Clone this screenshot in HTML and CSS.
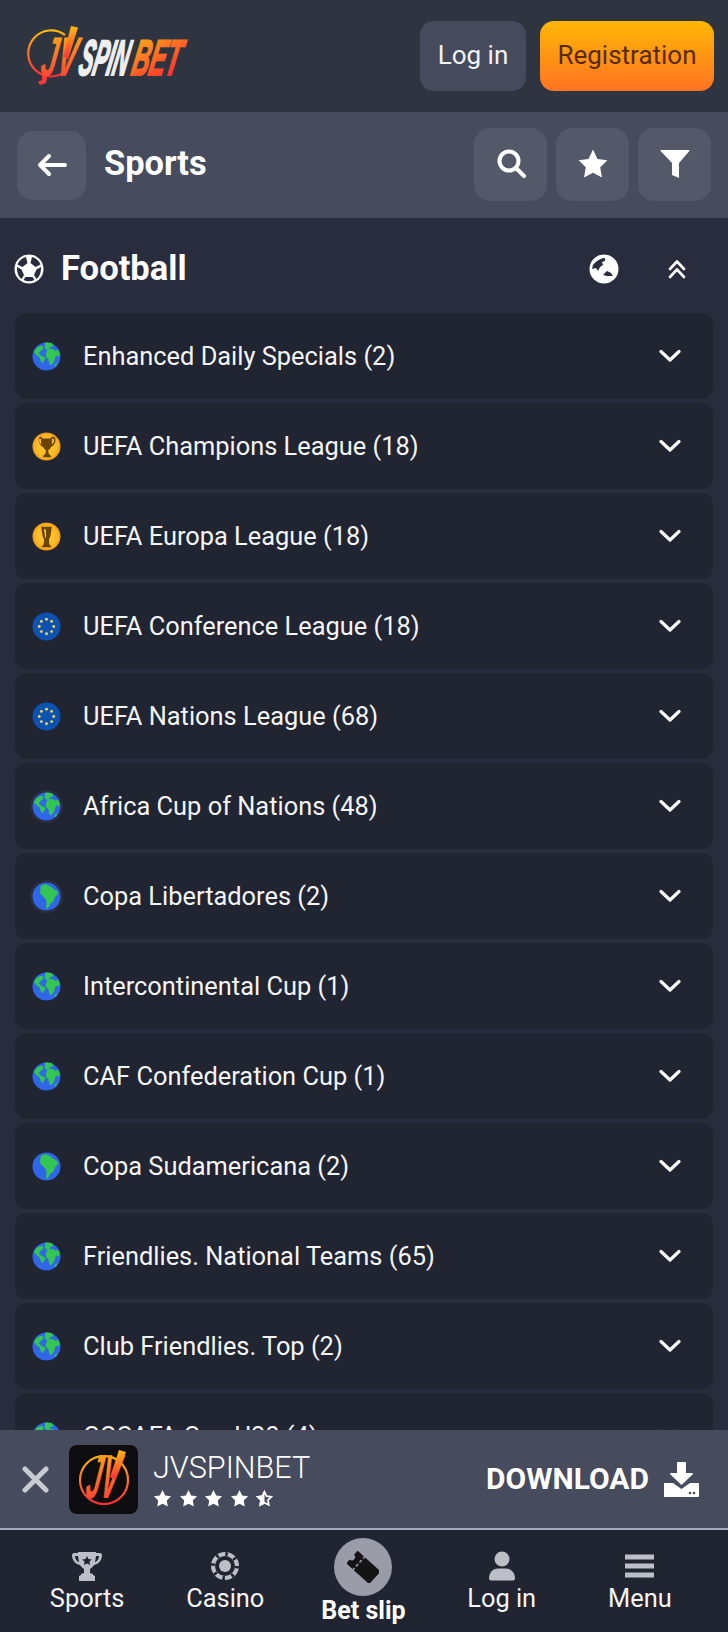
FILE: index.html
```html
<!DOCTYPE html>
<html lang="en">
<head>
    <meta charset="UTF-8">
    <title>JVSPINBET Sports</title>
    <link rel="stylesheet" href="styles.css">
</head>
<body>

<svg class="defs" width="0" height="0">
    <defs>
        <linearGradient id="logoOrange" x1="0" y1="0" x2="0" y2="1">
            <stop offset="0" stop-color="#ffb90f"/>
            <stop offset="1" stop-color="#ff2d3a"/>
        </linearGradient>
        <linearGradient id="logoBet" x1="0" y1="0" x2="0.6" y2="1">
            <stop offset="0" stop-color="#ffb91a"/>
            <stop offset="1" stop-color="#ff2b2b"/>
        </linearGradient>
        <radialGradient id="gold" cx="0.5" cy="0.5" r="0.5">
            <stop offset="0" stop-color="#ffd23a"/>
            <stop offset="0.8" stop-color="#fdb522"/>
            <stop offset="1" stop-color="#e8981a"/>
        </radialGradient>
        <symbol id="globeAtl" viewBox="0 0 30 30">
            <circle cx="15" cy="15" r="14.5" fill="#2f66ea"/>
            <path fill="#33c653" d="M13 1c3-.8 6-.5 8 .3l1 3-3 1-1 2.5-3 .2-2-2 .5-3zM16 8l5-1 3 2 3-1 2 5-2 2-2-1-1 2-1 4-3 4-2-1-1-5-2-2-1-3 1-3zM2 10l3-4 4-2 3 1-1 3-2 1-2 3 4 3 3 1-1 3-2 3-2-2-1-4-3-2-2-2zM24 23l2-1-1 3-2 1z"/>
        </symbol>
        <symbol id="globeSa" viewBox="0 0 30 30">
            <circle cx="15" cy="15" r="14.5" fill="#2f66ea"/>
            <path fill="#33c653" d="M9 4l5-2 4 2 4 3 5 3-.5 3-3 3-1 4-3 2-2 3-2 3-1-1 .5-5-.5-4-3-3-3-3 0-3z"/>
        </symbol>
        <symbol id="globeWhite" viewBox="0 0 30 30">
            <circle cx="15" cy="15" r="14.5" fill="#fff"/>
            <path fill="#282c3d" d="M16 4C12 4 7 7 4 11l-1 4 4-1 2 3 2-4 3-2-1-3 3-1zM14 21l4-4 4 2 2 3-6 0z"/>
        </symbol>
        <symbol id="euro" viewBox="0 0 30 30">
            <circle cx="15" cy="15" r="14.5" fill="#0b52b3"/>
            <g fill="#ecd455">
                <circle cx="15" cy="7.5" r="1.5"/>
                <circle cx="20.3" cy="9.7" r="1.5"/>
                <circle cx="22.5" cy="15" r="1.5"/>
                <circle cx="20.3" cy="20.3" r="1.5"/>
                <circle cx="15" cy="22.5" r="1.5"/>
                <circle cx="9.7" cy="20.3" r="1.5"/>
                <circle cx="7.5" cy="15" r="1.5"/>
                <circle cx="9.7" cy="9.7" r="1.5"/>
            </g>
        </symbol>
        <symbol id="cupCl" viewBox="0 0 30 30">
            <circle cx="15" cy="15" r="14.5" fill="url(#gold)"/>
            <path fill="#6b4400" transform="translate(-2.25 -2.5) scale(1.15)" d="M9 6.5c1.500 0 2 .5 2.500 1.500h7c.5-1 1-1.500 2.500-1.500 2 0 2.500 2.500 1.800 5-.6 2-2 3.500-3.800 4.500-.8 1.500-1.500 2.200-2.500 2.800l.5 3 2 2v1h-7v-1l2-2 .5-3c-1-.6-1.700-1.300-2.500-2.800-1.800-1-3.200-2.500-3.800-4.500-.7-2.500-.2-5 1.800-5zm0 1.500c-.9 0-1 1.700-.5 3.200.3 1 1 1.800 1.700 2.400L10 9c0-.5-.4-1-1-1zm12 0c-.6 0-1 .5-1 1l-.2 4.600c.7-.6 1.400-1.400 1.700-2.400.5-1.500.4-3.200-.5-3.200z"/>
        </symbol>
        <symbol id="cupEl" viewBox="0 0 30 30">
            <circle cx="15" cy="15" r="14.5" fill="url(#gold)"/>
            <path fill="#6b4400" d="M9.500 5h11l-1.500 10-1.500 3 .4 5 2.100 2.500v.5h-10v-.5l2.100-2.500.4-5-1.500-3z"/>
            <path fill="#ffd23a" d="M12.500 7.500h1.800l.3 8.500-1 0z"/>
        </symbol>
        <symbol id="chevron" viewBox="0 0 22 14">
            <path fill="none" stroke="#fff" stroke-width="3.2" stroke-linecap="round" stroke-linejoin="round" d="M2 2.500l9 8.500 9-8.500"/>
        </symbol>
        <symbol id="star" viewBox="0 0 20 20">
            <path fill="#fff" d="M10 1l2.800 5.800 6.200.9-4.500 4.400 1.100 6.300L10 15.400l-5.600 3 1.100-6.300L1 7.700l6.200-.9z"/>
        </symbol>
    </defs>
</svg>

<div class="page">
    <header class="top">
        <svg class="logo" viewBox="0 0 160 62" role="img" aria-label="JVSPINBET">
            <path d="M37 10A23 23 0 1 0 38 46" fill="none" stroke="url(#logoOrange)" stroke-width="2.2"/>
            <text class="logo-jv" transform="translate(11 51) skewX(-10) scale(.51 1)" fill="url(#logoOrange)">JV</text>
            <path d="M43 1l7 1.500-10 32-5-3z" fill="url(#logoOrange)"/>
            <path d="M14 50l5 2-1 6-6 2-2-3 4-2z" fill="#ff3a38"/>
            <text class="logo-word" transform="translate(49 50) skewX(-12) scale(.42 1)" fill="#efefef" stroke="#efefef">SPIN</text>
            <text class="logo-word" transform="translate(102 50) skewX(-12) scale(.48 1)" fill="url(#logoBet)" stroke="url(#logoBet)">BET</text>
        </svg>
        <div class="top-btns">
            <a class="btn btn-login" href="#">Log in</a>
            <a class="btn btn-reg" href="#">Registration</a>
        </div>
    </header>

    <div class="subbar">
        <a class="square back" href="#">
            <svg width="32" height="24" viewBox="0 0 32 24"><path fill="none" stroke="#fff" stroke-width="4" stroke-linecap="round" stroke-linejoin="round" d="M29 12H4M13 3l-9 9 9 9"/></svg>
        </a>
        <h1 class="subbar-title">Sports</h1>
        <div class="subbar-tools">
            <a class="square" href="#">
                <svg width="30" height="32" viewBox="0 0 30 32"><circle cx="13" cy="13" r="9.500" fill="none" stroke="#fff" stroke-width="4"/><path stroke="#fff" stroke-width="4" stroke-linecap="round" d="M20 20l8 8"/></svg>
            </a>
            <a class="square" href="#">
                <svg width="32" height="32" viewBox="0 0 20 20"><use href="#star"/></svg>
            </a>
            <a class="square" href="#">
                <svg width="30" height="32" viewBox="0 0 30 30"><path fill="#fff" d="M1 1h28c.5 0 .7.5.4 1L19 14v15l-7-3V14L.6 2C.3 1.500.5 1 1 1z"/></svg>
            </a>
        </div>
    </div>

    <main class="content">
        <div class="sport-head">
            <svg class="ball" width="30" height="30" viewBox="0 0 30 30">
                <circle cx="15" cy="15" r="14.5" fill="#fff"/>
                <path fill="#282c3d" d="M12 3l1.500 6-5 4-5-2.500C5 6.500 8 4 12 3zM18 3l-1.500 6 5 4 5-2.500C25 6.500 22 4 18 3zM3 13l4.500 2.500L10 21l-2.500 4C4.500 23 2.800 18 3 13zM27 13l-4.500 2.500L20 21l2.500 4c3-2 4.700-7 4.500-12zM11.500 23h7l2 3c-3.500 1.800-7.500 1.800-11 0z"/>
            </svg>
            <h2 class="sport-title">Football</h2>
            <svg class="sport-globe" width="30" height="30"><use href="#globeWhite"/></svg>
            <svg class="sport-collapse" width="18" height="20" viewBox="0 0 18 20">
                <path fill="none" stroke="#fff" stroke-width="2.6" stroke-linecap="round" stroke-linejoin="round" d="M2 10l7-7.500L16 10M2 18l7-7.500 7 7.500"/>
            </svg>
        </div>

        <ul class="leagues">
            <li class="league"><svg class="league-icon" width="29" height="29"><use href="#globeAtl"/></svg><span class="league-name">Enhanced Daily Specials (2)</span><svg class="chev" width="22" height="14"><use href="#chevron"/></svg></li>
            <li class="league"><svg class="league-icon" width="29" height="29"><use href="#cupCl"/></svg><span class="league-name">UEFA Champions League (18)</span><svg class="chev" width="22" height="14"><use href="#chevron"/></svg></li>
            <li class="league"><svg class="league-icon" width="29" height="29"><use href="#cupEl"/></svg><span class="league-name">UEFA Europa League (18)</span><svg class="chev" width="22" height="14"><use href="#chevron"/></svg></li>
            <li class="league"><svg class="league-icon" width="29" height="29"><use href="#euro"/></svg><span class="league-name">UEFA Conference League (18)</span><svg class="chev" width="22" height="14"><use href="#chevron"/></svg></li>
            <li class="league"><svg class="league-icon" width="29" height="29"><use href="#euro"/></svg><span class="league-name">UEFA Nations League (68)</span><svg class="chev" width="22" height="14"><use href="#chevron"/></svg></li>
            <li class="league"><svg class="league-icon ringed" width="29" height="29"><use href="#globeAtl"/></svg><span class="league-name">Africa Cup of Nations (48)</span><svg class="chev" width="22" height="14"><use href="#chevron"/></svg></li>
            <li class="league"><svg class="league-icon ringed" width="29" height="29"><use href="#globeSa"/></svg><span class="league-name">Copa Libertadores (2)</span><svg class="chev" width="22" height="14"><use href="#chevron"/></svg></li>
            <li class="league"><svg class="league-icon" width="29" height="29"><use href="#globeAtl"/></svg><span class="league-name">Intercontinental Cup (1)</span><svg class="chev" width="22" height="14"><use href="#chevron"/></svg></li>
            <li class="league"><svg class="league-icon" width="29" height="29"><use href="#globeAtl"/></svg><span class="league-name">CAF Confederation Cup (1)</span><svg class="chev" width="22" height="14"><use href="#chevron"/></svg></li>
            <li class="league"><svg class="league-icon" width="29" height="29"><use href="#globeSa"/></svg><span class="league-name">Copa Sudamericana (2)</span><svg class="chev" width="22" height="14"><use href="#chevron"/></svg></li>
            <li class="league"><svg class="league-icon" width="29" height="29"><use href="#globeAtl"/></svg><span class="league-name">Friendlies. National Teams (65)</span><svg class="chev" width="22" height="14"><use href="#chevron"/></svg></li>
            <li class="league"><svg class="league-icon" width="29" height="29"><use href="#globeAtl"/></svg><span class="league-name">Club Friendlies. Top (2)</span><svg class="chev" width="22" height="14"><use href="#chevron"/></svg></li>
            <li class="league"><svg class="league-icon" width="29" height="29"><use href="#globeAtl"/></svg><span class="league-name">COSAFA Cup U20 (4)</span><svg class="chev" width="22" height="14"><use href="#chevron"/></svg></li>
        </ul>
    </main>

    <div class="app-banner">
        <svg class="app-close" width="27" height="27" viewBox="0 0 27 27"><path stroke="#c9cbd1" stroke-width="5" stroke-linecap="round" d="M3 3l21 21M24 3L3 24"/></svg>
        <svg class="app-icon" viewBox="0 0 69 69">
            <rect width="69" height="69" rx="8" fill="#0d0d0f"/>
            <circle cx="35" cy="35" r="24" fill="none" stroke="url(#logoOrange)" stroke-width="2.2"/>
            <text class="app-jv" transform="translate(15 53) skewX(-10) scale(.42 1)" fill="url(#logoOrange)">JV</text>
            <path d="M50 5l7 2-11 28-5-3z" fill="url(#logoOrange)"/>
        </svg>
        <div class="app-info">
            <div class="app-name">JVSPINBET</div>
            <div class="app-stars">
                <svg width="19" height="19"><use href="#star"/></svg>
                <svg width="19" height="19"><use href="#star"/></svg>
                <svg width="19" height="19"><use href="#star"/></svg>
                <svg width="19" height="19"><use href="#star"/></svg>
                <svg width="19" height="19" viewBox="0 0 20 20"><path fill="none" stroke="#fff" stroke-width="1.8" d="M10 3l2.200 4.600 5 .7-3.600 3.500.9 5L10 14.400l-4.500 2.400.9-5L2.800 8.300l5-.7z"/><path fill="#fff" d="M10 1v14.400l-5.600 3 1.100-6.300L1 7.700l6.200-.9z"/></svg>
            </div>
        </div>
        <a class="app-download" href="#">DOWNLOAD</a>
        <svg class="app-dl-icon" width="35" height="35" viewBox="0 0 35 35">
            <path fill="#fff" d="M14 0h7c.6 0 1 .4 1 1v10h6c.8 0 1.200.9.600 1.500L17.500 23 6.400 12.500C5.800 11.900 6.200 11 7 11h6V1c0-.6.400-1 1-1z"/>
            <path fill="#fff" d="M1 21h8l8.500 6L26 21h8c.6 0 1 .4 1 1v12c0 .6-.4 1-1 1H1c-.6 0-1-.4-1-1V22c0-.6.400-1 1-1z"/>
            <circle cx="26" cy="31" r="1.300" fill="#464b5e"/>
            <circle cx="30" cy="31" r="1.300" fill="#464b5e"/>
        </svg>
    </div>

    <nav class="tabs">
        <a class="tab" href="#">
            <svg class="tab-icon" width="30" height="30" viewBox="0 0 30 30">
                <path fill="#bcbfc6" d="M6 1h18v1h4c1 0 2 1 2 2 0 5-3 9-8 10-1 2-3 3-4 4v4l3 1v1l2 1v5H7v-5l2-1v-1l3-1v-4c-1-1-3-2-4-4C3 13 0 9 0 4c0-1 1-2 2-2h4zM3 5c0 3 1.500 5 4 6.500L6 5zm24 0h-3l-1 6.500c2.500-1.500 4-3.500 4-6.500z"/>
                <path fill="#212431" d="M15 5l1.500 3 3.300.5-2.400 2.300.6 3.200-3-1.500-3 1.500.6-3.200-2.400-2.300 3.300-.5z"/>
            </svg>
            <span class="tab-label">Sports</span>
        </a>
        <a class="tab" href="#">
            <svg class="tab-icon" width="28" height="28" viewBox="0 0 28 28">
                <circle cx="14" cy="14" r="12" fill="none" stroke="#bcbfc6" stroke-width="4"/>
                <circle cx="14" cy="14" r="12" fill="none" stroke="#212431" stroke-width="4" stroke-dasharray="2.500 6.920"/>
                <circle cx="14" cy="14" r="8" fill="#212431"/>
                <circle cx="14" cy="14" r="6" fill="#bcbfc6"/>
            </svg>
            <span class="tab-label">Casino</span>
        </a>
        <a class="tab tab-active" href="#">
            <span class="tab-circle">
                <svg width="32" height="32" viewBox="0 0 30 30">
                    <g transform="rotate(42 15 15)">
                        <path fill="#141416" d="M1 7h8v2h1.500V7H30v16H10.500v-2H9v2H1v-5a3 3 0 0 0 0-6zM9 11v3h1.500v-3zm0 5v3h1.500v-3z"/>
                    </g>
                </svg>
            </span>
            <span class="tab-label tab-label-bold">Bet slip</span>
        </a>
        <a class="tab" href="#">
            <svg class="tab-icon" width="26" height="29" viewBox="0 0 26 29">
                <circle cx="13" cy="7.500" r="7.500" fill="#bcbfc6"/>
                <path fill="#bcbfc6" d="M0 27c0-6 4-10 9-10h8c5 0 9 4 9 10 0 1-1 2-2 2H2c-1 0-2-1-2-2z"/>
            </svg>
            <span class="tab-label">Log in</span>
        </a>
        <a class="tab" href="#">
            <svg class="tab-icon" width="29" height="29" viewBox="0 0 29 29">
                <path fill="#bcbfc6" d="M0 3h29v5H0zM0 12h29v5H0zM0 21h29v5H0z"/>
            </svg>
            <span class="tab-label">Menu</span>
        </a>
    </nav>
</div>

</body>
</html>
```

FILE: styles.css
```css
* {
    box-sizing: border-box;
}

html, body {
    margin: 0;
    padding: 0;
}

body {
    background: #282c3d;
    color: #fff;
    font: 400 25.4px/1.2 Roboto, "Liberation Sans", sans-serif;
}

a {
    color: inherit;
    text-decoration: none;
}

.defs {
    position: absolute;
}

.page {
    display: flex;
    flex-direction: column;
    width: 728px;
    height: 1632px;
    overflow: hidden;
}

/* top */
.top {
    display: flex;
    flex: none;
    align-items: center;
    justify-content: space-between;
    height: 112px;
    padding: 0 14px 0 28px;
    background: #2e3440;
}

.logo {
    display: block;
    width: 160px;
    height: 62px;
    overflow: visible;
}

.logo-jv {
    font: italic 700 56px "Liberation Sans", sans-serif;
}

.logo-word {
    font: italic 700 50px "Liberation Sans", sans-serif;
    stroke-width: 2px;
}

.top-btns {
    display: flex;
    gap: 14px;
}

.btn {
    display: flex;
    align-items: center;
    justify-content: center;
    height: 70px;
    border-radius: 14px;
    font-size: 26px;
}

.btn-login {
    width: 106px;
    background: #454a5c;
    color: #f1f2f4;
}

.btn-reg {
    width: 174px;
    background: linear-gradient(#ffb705, #ff7322);
    color: #5a2a00;
}

/* sub bar */
.subbar {
    display: flex;
    flex: none;
    align-items: center;
    height: 106px;
    padding: 0 17px;
    background: #464b5e;
}

.square {
    display: flex;
    flex: none;
    align-items: center;
    justify-content: center;
    width: 73px;
    height: 73px;
    border-radius: 16px;
    background: #545969;
}

.back {
    width: 69px;
    height: 69px;
}

.subbar-title {
    flex: 1;
    margin: 0 0 3px 18px;
    font-size: 34.4px;
    font-weight: 700;
}

.subbar-tools {
    display: flex;
    gap: 9px;
    margin-bottom: 2px;
}

/* list */
.content {
    flex: 1;
    min-height: 0;
    overflow: hidden;
}

.sport-head {
    display: flex;
    align-items: center;
    height: 95px;
    padding: 7px 42px 0 14px;
}

.sport-title {
    flex: 1;
    margin: 0 0 0 17px;
    font-size: 34.6px;
    font-weight: 700;
}

.sport-collapse {
    margin-left: 49px;
}

.leagues {
    display: flex;
    flex-direction: column;
    gap: 4px;
    margin: 0;
    padding: 0 15px;
    list-style: none;
}

.league {
    display: flex;
    flex: none;
    align-items: center;
    height: 86px;
    padding: 0 32px 0 17px;
    border-radius: 12px;
    background: #212431;
}

.league-icon {
    flex: none;
    border-radius: 50%;
}

.ringed {
    box-shadow: 0 0 0 2px #2d3040;
}

.league-name {
    flex: 1;
    margin-left: 22px;
    font-size: 25.4px;
    color: #f4f5f6;
}

.chev {
    flex: none;
}

/* app banner */
.app-banner {
    display: flex;
    flex: none;
    align-items: center;
    height: 100px;
    padding: 0 29px 0 22px;
    border-bottom: 2px solid #a4abc0;
    background: #464b5e;
}

.app-close {
    flex: none;
}

.app-icon {
    flex: none;
    width: 69px;
    height: 69px;
    margin-left: 20px;
}

.app-jv {
    font: italic 700 62px "Liberation Sans", sans-serif;
}

.app-info {
    flex: 1;
    margin-left: 15px;
}

.app-name {
    font-size: 30.6px;
    font-weight: 300;
    line-height: 36px;
}

.app-stars {
    display: flex;
    gap: 6.5px;
    margin-top: 3px;
}

.app-download {
    font-size: 30px;
    font-weight: 700;
}

.app-dl-icon {
    flex: none;
    margin-left: 15px;
}

/* bottom nav */
.tabs {
    display: grid;
    flex: none;
    grid-template-columns: repeat(5, 1fr);
    height: 102px;
    padding: 0 19px 0 18px;
    background: #212431;
}

.tab {
    display: flex;
    flex-direction: column;
    align-items: center;
}

.tab-icon {
    flex: none;
    margin-top: 21px;
    height: 30px;
}

.tab-label {
    margin-top: 1px;
    font-size: 25.4px;
    line-height: 32px;
    color: #f4f5f6;
}

.tab-circle {
    display: flex;
    align-items: center;
    justify-content: center;
    width: 58px;
    height: 58px;
    margin-top: 8px;
    border-radius: 50%;
    background: #9a9ca8;
}

.tab-label-bold {
    margin-top: -1px;
    font-size: 25px;
    font-weight: 700;
    color: #fff;
}
```
